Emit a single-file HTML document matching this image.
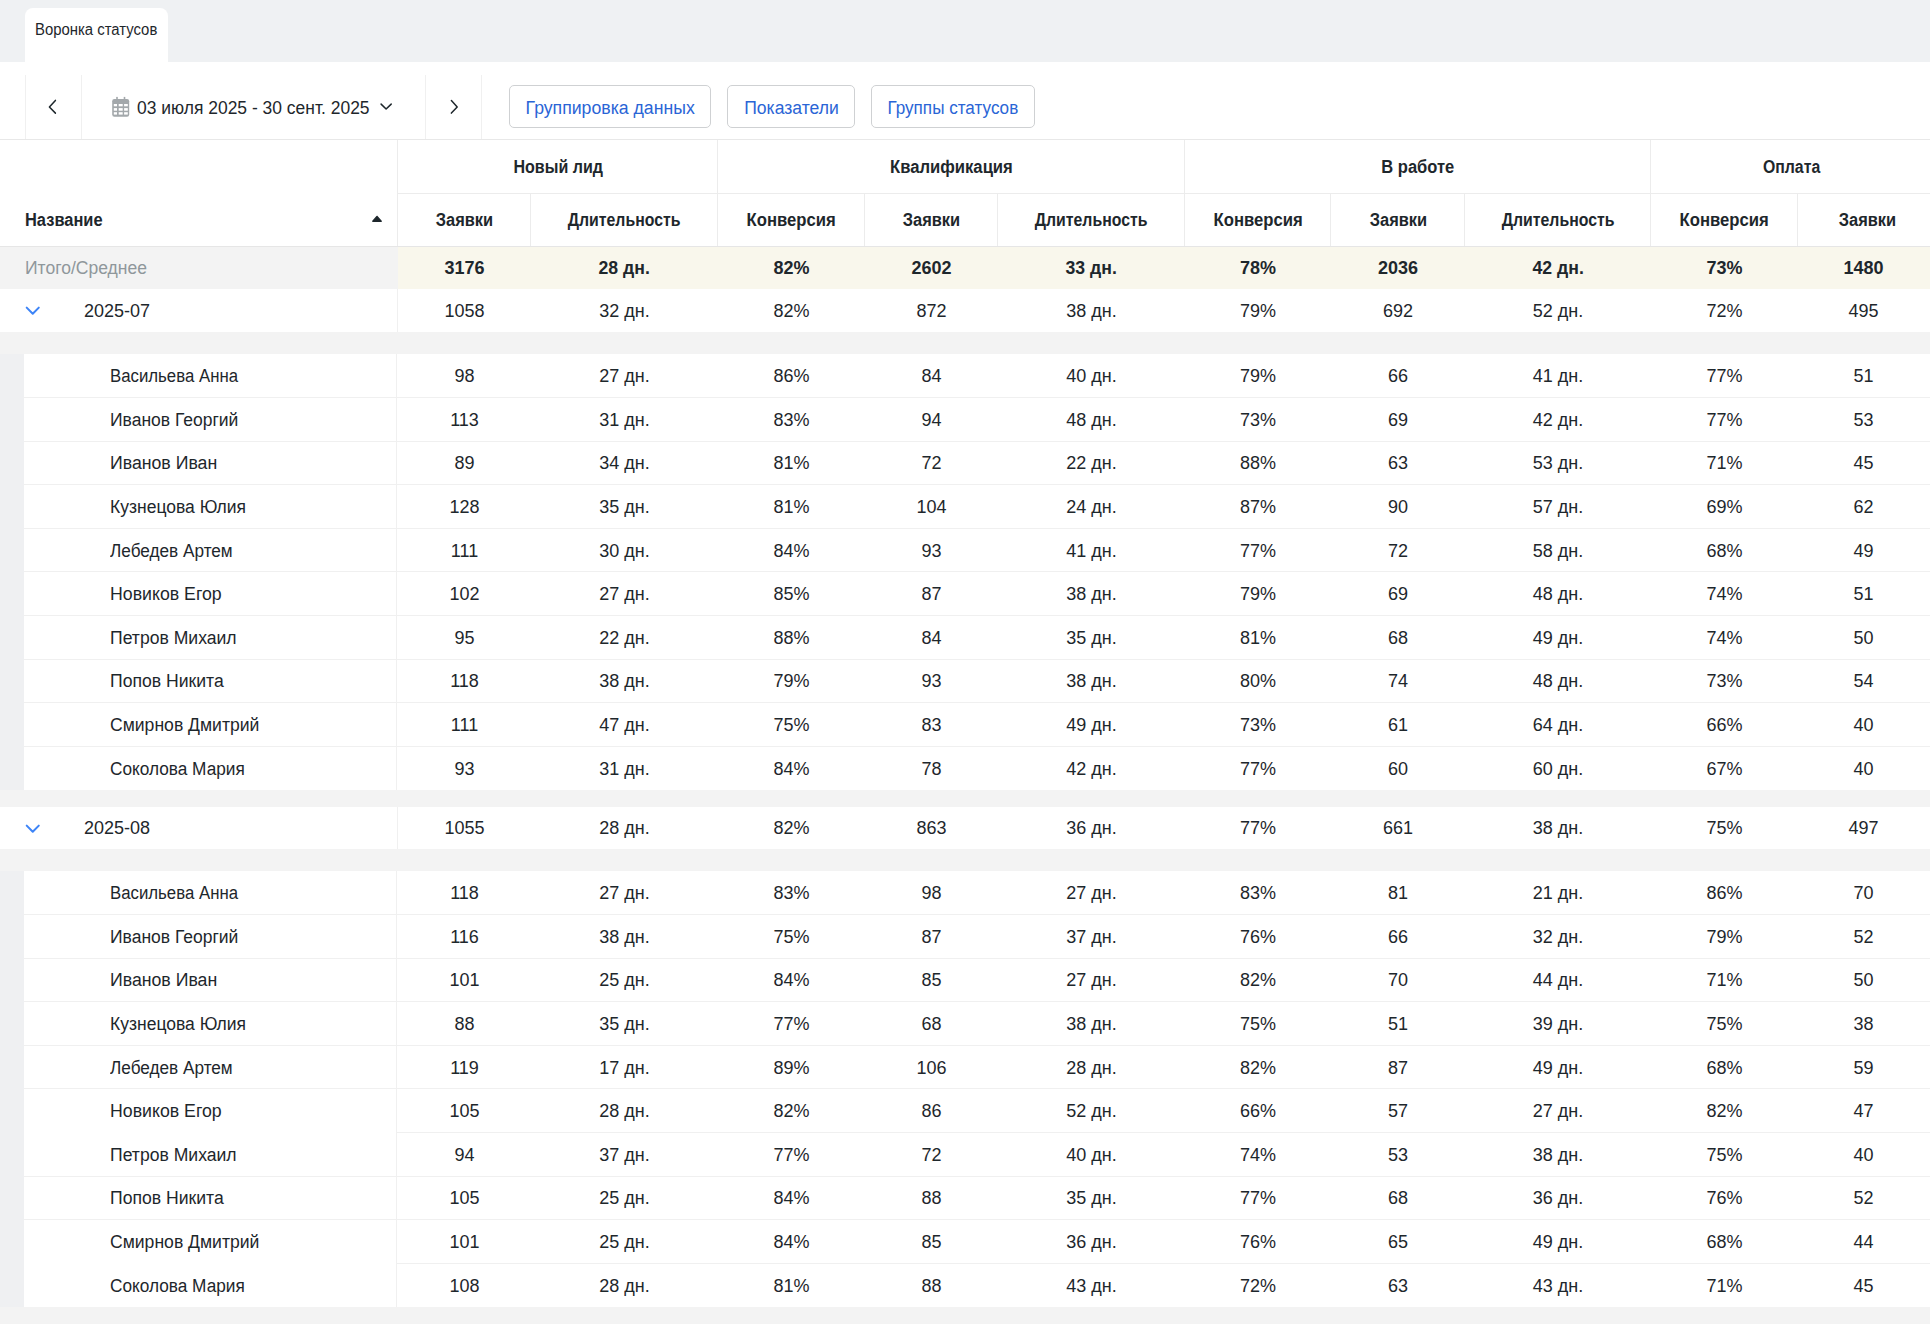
<!DOCTYPE html>
<html><head><meta charset="utf-8"><style>
html,body{margin:0;padding:0}
body{width:1930px;height:1324px;position:relative;overflow:hidden;background:#f3f3f3;font-family:"Liberation Sans",sans-serif;font-size:18px;color:#1e272c}
body>div,body>svg{position:absolute}
.c{display:flex;align-items:center;justify-content:center;white-space:nowrap}
.l{display:flex;align-items:center;white-space:nowrap}
.c span,.l span,.btn span{display:inline-block;position:relative;top:1px}
.l span{transform-origin:left center}
.b{font-weight:bold}
.tab{font-size:16px}
.btn span{top:1.7px}
.btn{display:flex;align-items:center;justify-content:center;border:1px solid #cfd1d3;border-radius:5px;color:#2a65d6;background:#fff;white-space:nowrap}
</style></head><body>
<div style="left:0px;top:0px;width:1930px;height:62px;background:#eff1f3"></div>
<div style="left:25px;top:8px;width:143px;height:54px;background:#fff;border-radius:8px 8px 0 0"></div>
<div class="l tab" style="left:35px;top:19px;height:20px;"><span style="transform:scaleX(0.93)">Воронка статусов</span></div>
<div style="left:0px;top:62px;width:1930px;height:78px;background:#fff"></div>
<div style="left:0px;top:139px;width:1930px;height:1px;background:#e8e8e8"></div>
<div style="left:25px;top:75px;width:1px;height:64px;background:#f0f0f0"></div>
<div style="left:81px;top:75px;width:1px;height:64px;background:#f0f0f0"></div>
<div style="left:425px;top:75px;width:1px;height:64px;background:#f0f0f0"></div>
<div style="left:481px;top:75px;width:1px;height:64px;background:#f0f0f0"></div>
<svg style="left:40px;top:95px" width="24" height="24" viewBox="0 0 24 24"><path d="M15.4 5.4 L9.4 12 L15.4 18.1" fill="none" stroke="#1e272c" stroke-width="1.5" stroke-linecap="round" stroke-linejoin="round"/></svg>
<svg style="left:442px;top:95px" width="24" height="24" viewBox="0 0 24 24"><path d="M9.4 5.6 L15.2 12 L9.4 18.1" fill="none" stroke="#1e272c" stroke-width="1.5" stroke-linecap="round" stroke-linejoin="round"/></svg>
<svg style="left:111px;top:96px" width="20" height="21" viewBox="0 0 20 21">
<rect x="1.2" y="3.1" width="17" height="17.6" rx="2.2" fill="#a3a8ab"/>
<rect x="5.2" y="0.9" width="1.6" height="3" fill="#a3a8ab"/><rect x="12.7" y="0.9" width="1.6" height="3" fill="#a3a8ab"/>
<g fill="#fff"><rect x="2.8" y="8" width="3.2" height="2.3"/><rect x="7.7" y="8" width="4" height="2.3"/><rect x="13.1" y="8" width="3.7" height="2.3"/>
<rect x="2.8" y="12.1" width="3.2" height="2.6"/><rect x="7.7" y="12.1" width="4" height="2.6"/><rect x="13.1" y="12.1" width="3.7" height="2.6"/>
<rect x="2.8" y="16.2" width="3.2" height="2.4"/><rect x="7.7" y="16.2" width="4" height="2.4"/><rect x="13.1" y="16.2" width="3.7" height="2.4"/></g></svg>
<div class="l " style="left:137px;top:95px;height:24px;"><span style="transform:scaleX(0.97)">03 июля 2025 - 30 сент. 2025</span></div>
<svg style="left:374px;top:95px" width="24" height="24" viewBox="0 0 24 24"><path d="M7.1 9.1 L12.1 14 L17.2 9.1" fill="none" stroke="#1e272c" stroke-width="1.5" stroke-linecap="round" stroke-linejoin="round"/></svg>
<div class="btn" style="left:509px;top:85px;width:200px;height:41px"><span style="transform:scaleX(0.982)">Группировка данных</span></div>
<div class="btn" style="left:727px;top:85px;width:126px;height:41px"><span style="transform:scaleX(0.975)">Показатели</span></div>
<div class="btn" style="left:871px;top:85px;width:162px;height:41px"><span style="transform:scaleX(0.95)">Группы статусов</span></div>
<div style="left:0px;top:140px;width:1930px;height:106px;background:#fff"></div>
<div style="left:397px;top:193px;width:1533px;height:1px;background:#ececec"></div>
<div style="left:0px;top:246px;width:1930px;height:1px;background:#e6e6e6"></div>
<div style="left:397px;top:140px;width:1px;height:106px;background:#ececec"></div>
<div style="left:717px;top:140px;width:1px;height:106px;background:#ececec"></div>
<div style="left:1184px;top:140px;width:1px;height:106px;background:#ececec"></div>
<div style="left:1650px;top:140px;width:1px;height:106px;background:#ececec"></div>
<div style="left:530px;top:193px;width:1px;height:53px;background:#ececec"></div>
<div style="left:864px;top:193px;width:1px;height:53px;background:#ececec"></div>
<div style="left:997px;top:193px;width:1px;height:53px;background:#ececec"></div>
<div style="left:1330px;top:193px;width:1px;height:53px;background:#ececec"></div>
<div style="left:1464px;top:193px;width:1px;height:53px;background:#ececec"></div>
<div style="left:1797px;top:193px;width:1px;height:53px;background:#ececec"></div>
<div class="c b" style="left:398px;top:140px;width:320px;height:53px;"><span style="transform:scaleX(0.891)">Новый лид</span></div>
<div class="c b" style="left:718px;top:140px;width:467px;height:53px;"><span style="transform:scaleX(0.925)">Квалификация</span></div>
<div class="c b" style="left:1185px;top:140px;width:466px;height:53px;"><span style="transform:scaleX(0.917)">В работе</span></div>
<div class="c b" style="left:1651px;top:140px;width:281px;height:53px;"><span style="transform:scaleX(0.88)">Оплата</span></div>
<div class="c b" style="left:398px;top:193px;width:133px;height:53px;"><span style="transform:scaleX(0.91)">Заявки</span></div>
<div class="c b" style="left:531px;top:193px;width:187px;height:53px;"><span style="transform:scaleX(0.88)">Длительность</span></div>
<div class="c b" style="left:718px;top:193px;width:147px;height:53px;"><span style="transform:scaleX(0.927)">Конверсия</span></div>
<div class="c b" style="left:865px;top:193px;width:133px;height:53px;"><span style="transform:scaleX(0.91)">Заявки</span></div>
<div class="c b" style="left:998px;top:193px;width:187px;height:53px;"><span style="transform:scaleX(0.88)">Длительность</span></div>
<div class="c b" style="left:1185px;top:193px;width:146px;height:53px;"><span style="transform:scaleX(0.927)">Конверсия</span></div>
<div class="c b" style="left:1331px;top:193px;width:134px;height:53px;"><span style="transform:scaleX(0.91)">Заявки</span></div>
<div class="c b" style="left:1465px;top:193px;width:186px;height:53px;"><span style="transform:scaleX(0.88)">Длительность</span></div>
<div class="c b" style="left:1651px;top:193px;width:147px;height:53px;"><span style="transform:scaleX(0.927)">Конверсия</span></div>
<div class="c b" style="left:1800.5px;top:193px;width:133px;height:53px;"><span style="transform:scaleX(0.91)">Заявки</span></div>
<div class="l b" style="left:25px;top:193px;height:53px;"><span style="transform:scaleX(0.913)">Название</span></div>
<svg style="left:371px;top:214px" width="12" height="9" viewBox="0 0 12 9"><path d="M1.8 7.2 L6 2.4 L10.2 7.2 Z" fill="#1e272c" stroke="#1e272c" stroke-width="1.4" stroke-linejoin="round"/></svg>
<div style="left:0px;top:247px;width:397.5px;height:41.69999999999999px;background:#f3f3f3"></div>
<div style="left:397.5px;top:247px;width:1533px;height:41.69999999999999px;background:#f9f7ec"></div>
<div class="l " style="left:25px;top:247px;height:41.69999999999999px;color:#8f979b"><span style="transform:scaleX(0.974)">Итого/Среднее</span></div>
<div class="c b" style="left:398px;top:247px;width:133px;height:41.69999999999999px;"><span>3176</span></div>
<div class="c b" style="left:531px;top:247px;width:187px;height:41.69999999999999px;"><span style="transform:scaleX(0.98)">28 дн.</span></div>
<div class="c b" style="left:718px;top:247px;width:147px;height:41.69999999999999px;"><span>82%</span></div>
<div class="c b" style="left:865px;top:247px;width:133px;height:41.69999999999999px;"><span>2602</span></div>
<div class="c b" style="left:998px;top:247px;width:187px;height:41.69999999999999px;"><span style="transform:scaleX(0.98)">33 дн.</span></div>
<div class="c b" style="left:1185px;top:247px;width:146px;height:41.69999999999999px;"><span>78%</span></div>
<div class="c b" style="left:1331px;top:247px;width:134px;height:41.69999999999999px;"><span>2036</span></div>
<div class="c b" style="left:1465px;top:247px;width:186px;height:41.69999999999999px;"><span style="transform:scaleX(0.98)">42 дн.</span></div>
<div class="c b" style="left:1651px;top:247px;width:147px;height:41.69999999999999px;"><span>73%</span></div>
<div class="c b" style="left:1797px;top:247px;width:133px;height:41.69999999999999px;"><span>1480</span></div>
<div style="left:0px;top:288.7px;width:1930px;height:43.0px;background:#fff"></div>
<div style="left:397px;top:288.7px;width:1px;height:43.0px;background:#f0f0f0"></div>
<svg style="left:20px;top:298.30px" width="24" height="24" viewBox="0 0 24 24"><path d="M6.7 9.6 L12.75 15.8 L18.8 9.6" fill="none" stroke="#3d84f7" stroke-width="2" stroke-linecap="round" stroke-linejoin="round"/></svg>
<div class="l " style="left:84px;top:288.7px;height:43.0px;"><span>2025-07</span></div>
<div class="c " style="left:398px;top:288.7px;width:133px;height:43.0px;"><span>1058</span></div>
<div class="c " style="left:531px;top:288.7px;width:187px;height:43.0px;"><span>32 дн.</span></div>
<div class="c " style="left:718px;top:288.7px;width:147px;height:43.0px;"><span>82%</span></div>
<div class="c " style="left:865px;top:288.7px;width:133px;height:43.0px;"><span>872</span></div>
<div class="c " style="left:998px;top:288.7px;width:187px;height:43.0px;"><span>38 дн.</span></div>
<div class="c " style="left:1185px;top:288.7px;width:146px;height:43.0px;"><span>79%</span></div>
<div class="c " style="left:1331px;top:288.7px;width:134px;height:43.0px;"><span>692</span></div>
<div class="c " style="left:1465px;top:288.7px;width:186px;height:43.0px;"><span>52 дн.</span></div>
<div class="c " style="left:1651px;top:288.7px;width:147px;height:43.0px;"><span>72%</span></div>
<div class="c " style="left:1797px;top:288.7px;width:133px;height:43.0px;"><span>495</span></div>
<div style="left:0px;top:354px;width:1930px;height:435.9000000000001px;background:#fff"></div>
<div style="left:0px;top:354px;width:24px;height:435.9000000000001px;background:#eff0f2"></div>
<div style="left:396px;top:354px;width:1px;height:435.9000000000001px;background:#f0f0f0"></div>
<div class="l " style="left:110px;top:354.0px;height:43.59px;"><span style="transform:scaleX(0.933)">Васильева Анна</span></div>
<div class="c " style="left:398px;top:354.0px;width:133px;height:43.59px;"><span>98</span></div>
<div class="c " style="left:531px;top:354.0px;width:187px;height:43.59px;"><span>27 дн.</span></div>
<div class="c " style="left:718px;top:354.0px;width:147px;height:43.59px;"><span>86%</span></div>
<div class="c " style="left:865px;top:354.0px;width:133px;height:43.59px;"><span>84</span></div>
<div class="c " style="left:998px;top:354.0px;width:187px;height:43.59px;"><span>40 дн.</span></div>
<div class="c " style="left:1185px;top:354.0px;width:146px;height:43.59px;"><span>79%</span></div>
<div class="c " style="left:1331px;top:354.0px;width:134px;height:43.59px;"><span>66</span></div>
<div class="c " style="left:1465px;top:354.0px;width:186px;height:43.59px;"><span>41 дн.</span></div>
<div class="c " style="left:1651px;top:354.0px;width:147px;height:43.59px;"><span>77%</span></div>
<div class="c " style="left:1797px;top:354.0px;width:133px;height:43.59px;"><span>51</span></div>
<div style="left:24px;top:397.09000000000003px;width:1906px;height:1px;background:#f0f0f0"></div>
<div class="l " style="left:110px;top:397.59000000000003px;height:43.59px;"><span style="transform:scaleX(0.972)">Иванов Георгий</span></div>
<div class="c " style="left:398px;top:397.59000000000003px;width:133px;height:43.59px;"><span>113</span></div>
<div class="c " style="left:531px;top:397.59000000000003px;width:187px;height:43.59px;"><span>31 дн.</span></div>
<div class="c " style="left:718px;top:397.59000000000003px;width:147px;height:43.59px;"><span>83%</span></div>
<div class="c " style="left:865px;top:397.59000000000003px;width:133px;height:43.59px;"><span>94</span></div>
<div class="c " style="left:998px;top:397.59000000000003px;width:187px;height:43.59px;"><span>48 дн.</span></div>
<div class="c " style="left:1185px;top:397.59000000000003px;width:146px;height:43.59px;"><span>73%</span></div>
<div class="c " style="left:1331px;top:397.59000000000003px;width:134px;height:43.59px;"><span>69</span></div>
<div class="c " style="left:1465px;top:397.59000000000003px;width:186px;height:43.59px;"><span>42 дн.</span></div>
<div class="c " style="left:1651px;top:397.59000000000003px;width:147px;height:43.59px;"><span>77%</span></div>
<div class="c " style="left:1797px;top:397.59000000000003px;width:133px;height:43.59px;"><span>53</span></div>
<div style="left:24px;top:440.68px;width:1906px;height:1px;background:#f0f0f0"></div>
<div class="l " style="left:110px;top:441.18px;height:43.59px;"><span style="transform:scaleX(0.983)">Иванов Иван</span></div>
<div class="c " style="left:398px;top:441.18px;width:133px;height:43.59px;"><span>89</span></div>
<div class="c " style="left:531px;top:441.18px;width:187px;height:43.59px;"><span>34 дн.</span></div>
<div class="c " style="left:718px;top:441.18px;width:147px;height:43.59px;"><span>81%</span></div>
<div class="c " style="left:865px;top:441.18px;width:133px;height:43.59px;"><span>72</span></div>
<div class="c " style="left:998px;top:441.18px;width:187px;height:43.59px;"><span>22 дн.</span></div>
<div class="c " style="left:1185px;top:441.18px;width:146px;height:43.59px;"><span>88%</span></div>
<div class="c " style="left:1331px;top:441.18px;width:134px;height:43.59px;"><span>63</span></div>
<div class="c " style="left:1465px;top:441.18px;width:186px;height:43.59px;"><span>53 дн.</span></div>
<div class="c " style="left:1651px;top:441.18px;width:147px;height:43.59px;"><span>71%</span></div>
<div class="c " style="left:1797px;top:441.18px;width:133px;height:43.59px;"><span>45</span></div>
<div style="left:24px;top:484.27px;width:1906px;height:1px;background:#f0f0f0"></div>
<div class="l " style="left:110px;top:484.77px;height:43.59px;"><span style="transform:scaleX(0.973)">Кузнецова Юлия</span></div>
<div class="c " style="left:398px;top:484.77px;width:133px;height:43.59px;"><span>128</span></div>
<div class="c " style="left:531px;top:484.77px;width:187px;height:43.59px;"><span>35 дн.</span></div>
<div class="c " style="left:718px;top:484.77px;width:147px;height:43.59px;"><span>81%</span></div>
<div class="c " style="left:865px;top:484.77px;width:133px;height:43.59px;"><span>104</span></div>
<div class="c " style="left:998px;top:484.77px;width:187px;height:43.59px;"><span>24 дн.</span></div>
<div class="c " style="left:1185px;top:484.77px;width:146px;height:43.59px;"><span>87%</span></div>
<div class="c " style="left:1331px;top:484.77px;width:134px;height:43.59px;"><span>90</span></div>
<div class="c " style="left:1465px;top:484.77px;width:186px;height:43.59px;"><span>57 дн.</span></div>
<div class="c " style="left:1651px;top:484.77px;width:147px;height:43.59px;"><span>69%</span></div>
<div class="c " style="left:1797px;top:484.77px;width:133px;height:43.59px;"><span>62</span></div>
<div style="left:24px;top:527.86px;width:1906px;height:1px;background:#f0f0f0"></div>
<div class="l " style="left:110px;top:528.36px;height:43.59px;"><span style="transform:scaleX(0.955)">Лебедев Артем</span></div>
<div class="c " style="left:398px;top:528.36px;width:133px;height:43.59px;"><span>111</span></div>
<div class="c " style="left:531px;top:528.36px;width:187px;height:43.59px;"><span>30 дн.</span></div>
<div class="c " style="left:718px;top:528.36px;width:147px;height:43.59px;"><span>84%</span></div>
<div class="c " style="left:865px;top:528.36px;width:133px;height:43.59px;"><span>93</span></div>
<div class="c " style="left:998px;top:528.36px;width:187px;height:43.59px;"><span>41 дн.</span></div>
<div class="c " style="left:1185px;top:528.36px;width:146px;height:43.59px;"><span>77%</span></div>
<div class="c " style="left:1331px;top:528.36px;width:134px;height:43.59px;"><span>72</span></div>
<div class="c " style="left:1465px;top:528.36px;width:186px;height:43.59px;"><span>58 дн.</span></div>
<div class="c " style="left:1651px;top:528.36px;width:147px;height:43.59px;"><span>68%</span></div>
<div class="c " style="left:1797px;top:528.36px;width:133px;height:43.59px;"><span>49</span></div>
<div style="left:24px;top:571.45px;width:1906px;height:1px;background:#f0f0f0"></div>
<div class="l " style="left:110px;top:571.95px;height:43.59px;"><span style="transform:scaleX(0.984)">Новиков Егор</span></div>
<div class="c " style="left:398px;top:571.95px;width:133px;height:43.59px;"><span>102</span></div>
<div class="c " style="left:531px;top:571.95px;width:187px;height:43.59px;"><span>27 дн.</span></div>
<div class="c " style="left:718px;top:571.95px;width:147px;height:43.59px;"><span>85%</span></div>
<div class="c " style="left:865px;top:571.95px;width:133px;height:43.59px;"><span>87</span></div>
<div class="c " style="left:998px;top:571.95px;width:187px;height:43.59px;"><span>38 дн.</span></div>
<div class="c " style="left:1185px;top:571.95px;width:146px;height:43.59px;"><span>79%</span></div>
<div class="c " style="left:1331px;top:571.95px;width:134px;height:43.59px;"><span>69</span></div>
<div class="c " style="left:1465px;top:571.95px;width:186px;height:43.59px;"><span>48 дн.</span></div>
<div class="c " style="left:1651px;top:571.95px;width:147px;height:43.59px;"><span>74%</span></div>
<div class="c " style="left:1797px;top:571.95px;width:133px;height:43.59px;"><span>51</span></div>
<div style="left:24px;top:615.04px;width:1906px;height:1px;background:#f0f0f0"></div>
<div class="l " style="left:110px;top:615.54px;height:43.59px;"><span style="transform:scaleX(0.977)">Петров Михаил</span></div>
<div class="c " style="left:398px;top:615.54px;width:133px;height:43.59px;"><span>95</span></div>
<div class="c " style="left:531px;top:615.54px;width:187px;height:43.59px;"><span>22 дн.</span></div>
<div class="c " style="left:718px;top:615.54px;width:147px;height:43.59px;"><span>88%</span></div>
<div class="c " style="left:865px;top:615.54px;width:133px;height:43.59px;"><span>84</span></div>
<div class="c " style="left:998px;top:615.54px;width:187px;height:43.59px;"><span>35 дн.</span></div>
<div class="c " style="left:1185px;top:615.54px;width:146px;height:43.59px;"><span>81%</span></div>
<div class="c " style="left:1331px;top:615.54px;width:134px;height:43.59px;"><span>68</span></div>
<div class="c " style="left:1465px;top:615.54px;width:186px;height:43.59px;"><span>49 дн.</span></div>
<div class="c " style="left:1651px;top:615.54px;width:147px;height:43.59px;"><span>74%</span></div>
<div class="c " style="left:1797px;top:615.54px;width:133px;height:43.59px;"><span>50</span></div>
<div style="left:24px;top:658.63px;width:1906px;height:1px;background:#f0f0f0"></div>
<div class="l " style="left:110px;top:659.13px;height:43.59px;"><span style="transform:scaleX(0.978)">Попов Никита</span></div>
<div class="c " style="left:398px;top:659.13px;width:133px;height:43.59px;"><span>118</span></div>
<div class="c " style="left:531px;top:659.13px;width:187px;height:43.59px;"><span>38 дн.</span></div>
<div class="c " style="left:718px;top:659.13px;width:147px;height:43.59px;"><span>79%</span></div>
<div class="c " style="left:865px;top:659.13px;width:133px;height:43.59px;"><span>93</span></div>
<div class="c " style="left:998px;top:659.13px;width:187px;height:43.59px;"><span>38 дн.</span></div>
<div class="c " style="left:1185px;top:659.13px;width:146px;height:43.59px;"><span>80%</span></div>
<div class="c " style="left:1331px;top:659.13px;width:134px;height:43.59px;"><span>74</span></div>
<div class="c " style="left:1465px;top:659.13px;width:186px;height:43.59px;"><span>48 дн.</span></div>
<div class="c " style="left:1651px;top:659.13px;width:147px;height:43.59px;"><span>73%</span></div>
<div class="c " style="left:1797px;top:659.13px;width:133px;height:43.59px;"><span>54</span></div>
<div style="left:24px;top:702.22px;width:1906px;height:1px;background:#f0f0f0"></div>
<div class="l " style="left:110px;top:702.72px;height:43.59px;"><span style="transform:scaleX(0.977)">Смирнов Дмитрий</span></div>
<div class="c " style="left:398px;top:702.72px;width:133px;height:43.59px;"><span>111</span></div>
<div class="c " style="left:531px;top:702.72px;width:187px;height:43.59px;"><span>47 дн.</span></div>
<div class="c " style="left:718px;top:702.72px;width:147px;height:43.59px;"><span>75%</span></div>
<div class="c " style="left:865px;top:702.72px;width:133px;height:43.59px;"><span>83</span></div>
<div class="c " style="left:998px;top:702.72px;width:187px;height:43.59px;"><span>49 дн.</span></div>
<div class="c " style="left:1185px;top:702.72px;width:146px;height:43.59px;"><span>73%</span></div>
<div class="c " style="left:1331px;top:702.72px;width:134px;height:43.59px;"><span>61</span></div>
<div class="c " style="left:1465px;top:702.72px;width:186px;height:43.59px;"><span>64 дн.</span></div>
<div class="c " style="left:1651px;top:702.72px;width:147px;height:43.59px;"><span>66%</span></div>
<div class="c " style="left:1797px;top:702.72px;width:133px;height:43.59px;"><span>40</span></div>
<div style="left:24px;top:745.8100000000001px;width:1906px;height:1px;background:#f0f0f0"></div>
<div class="l " style="left:110px;top:746.3100000000001px;height:43.59px;"><span style="transform:scaleX(0.957)">Соколова Мария</span></div>
<div class="c " style="left:398px;top:746.3100000000001px;width:133px;height:43.59px;"><span>93</span></div>
<div class="c " style="left:531px;top:746.3100000000001px;width:187px;height:43.59px;"><span>31 дн.</span></div>
<div class="c " style="left:718px;top:746.3100000000001px;width:147px;height:43.59px;"><span>84%</span></div>
<div class="c " style="left:865px;top:746.3100000000001px;width:133px;height:43.59px;"><span>78</span></div>
<div class="c " style="left:998px;top:746.3100000000001px;width:187px;height:43.59px;"><span>42 дн.</span></div>
<div class="c " style="left:1185px;top:746.3100000000001px;width:146px;height:43.59px;"><span>77%</span></div>
<div class="c " style="left:1331px;top:746.3100000000001px;width:134px;height:43.59px;"><span>60</span></div>
<div class="c " style="left:1465px;top:746.3100000000001px;width:186px;height:43.59px;"><span>60 дн.</span></div>
<div class="c " style="left:1651px;top:746.3100000000001px;width:147px;height:43.59px;"><span>67%</span></div>
<div class="c " style="left:1797px;top:746.3100000000001px;width:133px;height:43.59px;"><span>40</span></div>
<div style="left:0px;top:806.8px;width:1930px;height:42.30000000000007px;background:#fff"></div>
<div style="left:397px;top:806.8px;width:1px;height:42.30000000000007px;background:#f0f0f0"></div>
<svg style="left:20px;top:816.05px" width="24" height="24" viewBox="0 0 24 24"><path d="M6.7 9.6 L12.75 15.8 L18.8 9.6" fill="none" stroke="#3d84f7" stroke-width="2" stroke-linecap="round" stroke-linejoin="round"/></svg>
<div class="l " style="left:84px;top:806.8px;height:42.30000000000007px;"><span>2025-08</span></div>
<div class="c " style="left:398px;top:806.8px;width:133px;height:42.30000000000007px;"><span>1055</span></div>
<div class="c " style="left:531px;top:806.8px;width:187px;height:42.30000000000007px;"><span>28 дн.</span></div>
<div class="c " style="left:718px;top:806.8px;width:147px;height:42.30000000000007px;"><span>82%</span></div>
<div class="c " style="left:865px;top:806.8px;width:133px;height:42.30000000000007px;"><span>863</span></div>
<div class="c " style="left:998px;top:806.8px;width:187px;height:42.30000000000007px;"><span>36 дн.</span></div>
<div class="c " style="left:1185px;top:806.8px;width:146px;height:42.30000000000007px;"><span>77%</span></div>
<div class="c " style="left:1331px;top:806.8px;width:134px;height:42.30000000000007px;"><span>661</span></div>
<div class="c " style="left:1465px;top:806.8px;width:186px;height:42.30000000000007px;"><span>38 дн.</span></div>
<div class="c " style="left:1651px;top:806.8px;width:147px;height:42.30000000000007px;"><span>75%</span></div>
<div class="c " style="left:1797px;top:806.8px;width:133px;height:42.30000000000007px;"><span>497</span></div>
<div style="left:0px;top:871px;width:1930px;height:435.9000000000001px;background:#fff"></div>
<div style="left:0px;top:871px;width:24px;height:435.9000000000001px;background:#eff0f2"></div>
<div style="left:396px;top:871px;width:1px;height:435.9000000000001px;background:#f0f0f0"></div>
<div class="l " style="left:110px;top:871.0px;height:43.59px;"><span style="transform:scaleX(0.933)">Васильева Анна</span></div>
<div class="c " style="left:398px;top:871.0px;width:133px;height:43.59px;"><span>118</span></div>
<div class="c " style="left:531px;top:871.0px;width:187px;height:43.59px;"><span>27 дн.</span></div>
<div class="c " style="left:718px;top:871.0px;width:147px;height:43.59px;"><span>83%</span></div>
<div class="c " style="left:865px;top:871.0px;width:133px;height:43.59px;"><span>98</span></div>
<div class="c " style="left:998px;top:871.0px;width:187px;height:43.59px;"><span>27 дн.</span></div>
<div class="c " style="left:1185px;top:871.0px;width:146px;height:43.59px;"><span>83%</span></div>
<div class="c " style="left:1331px;top:871.0px;width:134px;height:43.59px;"><span>81</span></div>
<div class="c " style="left:1465px;top:871.0px;width:186px;height:43.59px;"><span>21 дн.</span></div>
<div class="c " style="left:1651px;top:871.0px;width:147px;height:43.59px;"><span>86%</span></div>
<div class="c " style="left:1797px;top:871.0px;width:133px;height:43.59px;"><span>70</span></div>
<div style="left:24px;top:914.09px;width:1906px;height:1px;background:#f0f0f0"></div>
<div class="l " style="left:110px;top:914.59px;height:43.59px;"><span style="transform:scaleX(0.972)">Иванов Георгий</span></div>
<div class="c " style="left:398px;top:914.59px;width:133px;height:43.59px;"><span>116</span></div>
<div class="c " style="left:531px;top:914.59px;width:187px;height:43.59px;"><span>38 дн.</span></div>
<div class="c " style="left:718px;top:914.59px;width:147px;height:43.59px;"><span>75%</span></div>
<div class="c " style="left:865px;top:914.59px;width:133px;height:43.59px;"><span>87</span></div>
<div class="c " style="left:998px;top:914.59px;width:187px;height:43.59px;"><span>37 дн.</span></div>
<div class="c " style="left:1185px;top:914.59px;width:146px;height:43.59px;"><span>76%</span></div>
<div class="c " style="left:1331px;top:914.59px;width:134px;height:43.59px;"><span>66</span></div>
<div class="c " style="left:1465px;top:914.59px;width:186px;height:43.59px;"><span>32 дн.</span></div>
<div class="c " style="left:1651px;top:914.59px;width:147px;height:43.59px;"><span>79%</span></div>
<div class="c " style="left:1797px;top:914.59px;width:133px;height:43.59px;"><span>52</span></div>
<div style="left:24px;top:957.6800000000001px;width:1906px;height:1px;background:#f0f0f0"></div>
<div class="l " style="left:110px;top:958.1800000000001px;height:43.59px;"><span style="transform:scaleX(0.983)">Иванов Иван</span></div>
<div class="c " style="left:398px;top:958.1800000000001px;width:133px;height:43.59px;"><span>101</span></div>
<div class="c " style="left:531px;top:958.1800000000001px;width:187px;height:43.59px;"><span>25 дн.</span></div>
<div class="c " style="left:718px;top:958.1800000000001px;width:147px;height:43.59px;"><span>84%</span></div>
<div class="c " style="left:865px;top:958.1800000000001px;width:133px;height:43.59px;"><span>85</span></div>
<div class="c " style="left:998px;top:958.1800000000001px;width:187px;height:43.59px;"><span>27 дн.</span></div>
<div class="c " style="left:1185px;top:958.1800000000001px;width:146px;height:43.59px;"><span>82%</span></div>
<div class="c " style="left:1331px;top:958.1800000000001px;width:134px;height:43.59px;"><span>70</span></div>
<div class="c " style="left:1465px;top:958.1800000000001px;width:186px;height:43.59px;"><span>44 дн.</span></div>
<div class="c " style="left:1651px;top:958.1800000000001px;width:147px;height:43.59px;"><span>71%</span></div>
<div class="c " style="left:1797px;top:958.1800000000001px;width:133px;height:43.59px;"><span>50</span></div>
<div style="left:24px;top:1001.27px;width:1906px;height:1px;background:#f0f0f0"></div>
<div class="l " style="left:110px;top:1001.77px;height:43.59px;"><span style="transform:scaleX(0.973)">Кузнецова Юлия</span></div>
<div class="c " style="left:398px;top:1001.77px;width:133px;height:43.59px;"><span>88</span></div>
<div class="c " style="left:531px;top:1001.77px;width:187px;height:43.59px;"><span>35 дн.</span></div>
<div class="c " style="left:718px;top:1001.77px;width:147px;height:43.59px;"><span>77%</span></div>
<div class="c " style="left:865px;top:1001.77px;width:133px;height:43.59px;"><span>68</span></div>
<div class="c " style="left:998px;top:1001.77px;width:187px;height:43.59px;"><span>38 дн.</span></div>
<div class="c " style="left:1185px;top:1001.77px;width:146px;height:43.59px;"><span>75%</span></div>
<div class="c " style="left:1331px;top:1001.77px;width:134px;height:43.59px;"><span>51</span></div>
<div class="c " style="left:1465px;top:1001.77px;width:186px;height:43.59px;"><span>39 дн.</span></div>
<div class="c " style="left:1651px;top:1001.77px;width:147px;height:43.59px;"><span>75%</span></div>
<div class="c " style="left:1797px;top:1001.77px;width:133px;height:43.59px;"><span>38</span></div>
<div style="left:24px;top:1044.8600000000001px;width:1906px;height:1px;background:#f0f0f0"></div>
<div class="l " style="left:110px;top:1045.3600000000001px;height:43.59px;"><span style="transform:scaleX(0.955)">Лебедев Артем</span></div>
<div class="c " style="left:398px;top:1045.3600000000001px;width:133px;height:43.59px;"><span>119</span></div>
<div class="c " style="left:531px;top:1045.3600000000001px;width:187px;height:43.59px;"><span>17 дн.</span></div>
<div class="c " style="left:718px;top:1045.3600000000001px;width:147px;height:43.59px;"><span>89%</span></div>
<div class="c " style="left:865px;top:1045.3600000000001px;width:133px;height:43.59px;"><span>106</span></div>
<div class="c " style="left:998px;top:1045.3600000000001px;width:187px;height:43.59px;"><span>28 дн.</span></div>
<div class="c " style="left:1185px;top:1045.3600000000001px;width:146px;height:43.59px;"><span>82%</span></div>
<div class="c " style="left:1331px;top:1045.3600000000001px;width:134px;height:43.59px;"><span>87</span></div>
<div class="c " style="left:1465px;top:1045.3600000000001px;width:186px;height:43.59px;"><span>49 дн.</span></div>
<div class="c " style="left:1651px;top:1045.3600000000001px;width:147px;height:43.59px;"><span>68%</span></div>
<div class="c " style="left:1797px;top:1045.3600000000001px;width:133px;height:43.59px;"><span>59</span></div>
<div style="left:24px;top:1088.45px;width:1906px;height:1px;background:#f0f0f0"></div>
<div class="l " style="left:110px;top:1088.95px;height:43.59px;"><span style="transform:scaleX(0.984)">Новиков Егор</span></div>
<div class="c " style="left:398px;top:1088.95px;width:133px;height:43.59px;"><span>105</span></div>
<div class="c " style="left:531px;top:1088.95px;width:187px;height:43.59px;"><span>28 дн.</span></div>
<div class="c " style="left:718px;top:1088.95px;width:147px;height:43.59px;"><span>82%</span></div>
<div class="c " style="left:865px;top:1088.95px;width:133px;height:43.59px;"><span>86</span></div>
<div class="c " style="left:998px;top:1088.95px;width:187px;height:43.59px;"><span>52 дн.</span></div>
<div class="c " style="left:1185px;top:1088.95px;width:146px;height:43.59px;"><span>66%</span></div>
<div class="c " style="left:1331px;top:1088.95px;width:134px;height:43.59px;"><span>57</span></div>
<div class="c " style="left:1465px;top:1088.95px;width:186px;height:43.59px;"><span>27 дн.</span></div>
<div class="c " style="left:1651px;top:1088.95px;width:147px;height:43.59px;"><span>82%</span></div>
<div class="c " style="left:1797px;top:1088.95px;width:133px;height:43.59px;"><span>47</span></div>
<div style="left:397px;top:1132.04px;width:1533px;height:1px;background:#f0f0f0"></div>
<div class="l " style="left:110px;top:1132.54px;height:43.59px;"><span style="transform:scaleX(0.977)">Петров Михаил</span></div>
<div class="c " style="left:398px;top:1132.54px;width:133px;height:43.59px;"><span>94</span></div>
<div class="c " style="left:531px;top:1132.54px;width:187px;height:43.59px;"><span>37 дн.</span></div>
<div class="c " style="left:718px;top:1132.54px;width:147px;height:43.59px;"><span>77%</span></div>
<div class="c " style="left:865px;top:1132.54px;width:133px;height:43.59px;"><span>72</span></div>
<div class="c " style="left:998px;top:1132.54px;width:187px;height:43.59px;"><span>40 дн.</span></div>
<div class="c " style="left:1185px;top:1132.54px;width:146px;height:43.59px;"><span>74%</span></div>
<div class="c " style="left:1331px;top:1132.54px;width:134px;height:43.59px;"><span>53</span></div>
<div class="c " style="left:1465px;top:1132.54px;width:186px;height:43.59px;"><span>38 дн.</span></div>
<div class="c " style="left:1651px;top:1132.54px;width:147px;height:43.59px;"><span>75%</span></div>
<div class="c " style="left:1797px;top:1132.54px;width:133px;height:43.59px;"><span>40</span></div>
<div style="left:24px;top:1175.63px;width:1906px;height:1px;background:#f0f0f0"></div>
<div class="l " style="left:110px;top:1176.13px;height:43.59px;"><span style="transform:scaleX(0.978)">Попов Никита</span></div>
<div class="c " style="left:398px;top:1176.13px;width:133px;height:43.59px;"><span>105</span></div>
<div class="c " style="left:531px;top:1176.13px;width:187px;height:43.59px;"><span>25 дн.</span></div>
<div class="c " style="left:718px;top:1176.13px;width:147px;height:43.59px;"><span>84%</span></div>
<div class="c " style="left:865px;top:1176.13px;width:133px;height:43.59px;"><span>88</span></div>
<div class="c " style="left:998px;top:1176.13px;width:187px;height:43.59px;"><span>35 дн.</span></div>
<div class="c " style="left:1185px;top:1176.13px;width:146px;height:43.59px;"><span>77%</span></div>
<div class="c " style="left:1331px;top:1176.13px;width:134px;height:43.59px;"><span>68</span></div>
<div class="c " style="left:1465px;top:1176.13px;width:186px;height:43.59px;"><span>36 дн.</span></div>
<div class="c " style="left:1651px;top:1176.13px;width:147px;height:43.59px;"><span>76%</span></div>
<div class="c " style="left:1797px;top:1176.13px;width:133px;height:43.59px;"><span>52</span></div>
<div style="left:24px;top:1219.22px;width:1906px;height:1px;background:#f0f0f0"></div>
<div class="l " style="left:110px;top:1219.72px;height:43.59px;"><span style="transform:scaleX(0.977)">Смирнов Дмитрий</span></div>
<div class="c " style="left:398px;top:1219.72px;width:133px;height:43.59px;"><span>101</span></div>
<div class="c " style="left:531px;top:1219.72px;width:187px;height:43.59px;"><span>25 дн.</span></div>
<div class="c " style="left:718px;top:1219.72px;width:147px;height:43.59px;"><span>84%</span></div>
<div class="c " style="left:865px;top:1219.72px;width:133px;height:43.59px;"><span>85</span></div>
<div class="c " style="left:998px;top:1219.72px;width:187px;height:43.59px;"><span>36 дн.</span></div>
<div class="c " style="left:1185px;top:1219.72px;width:146px;height:43.59px;"><span>76%</span></div>
<div class="c " style="left:1331px;top:1219.72px;width:134px;height:43.59px;"><span>65</span></div>
<div class="c " style="left:1465px;top:1219.72px;width:186px;height:43.59px;"><span>49 дн.</span></div>
<div class="c " style="left:1651px;top:1219.72px;width:147px;height:43.59px;"><span>68%</span></div>
<div class="c " style="left:1797px;top:1219.72px;width:133px;height:43.59px;"><span>44</span></div>
<div style="left:397px;top:1262.81px;width:1533px;height:1px;background:#f0f0f0"></div>
<div class="l " style="left:110px;top:1263.31px;height:43.59px;"><span style="transform:scaleX(0.957)">Соколова Мария</span></div>
<div class="c " style="left:398px;top:1263.31px;width:133px;height:43.59px;"><span>108</span></div>
<div class="c " style="left:531px;top:1263.31px;width:187px;height:43.59px;"><span>28 дн.</span></div>
<div class="c " style="left:718px;top:1263.31px;width:147px;height:43.59px;"><span>81%</span></div>
<div class="c " style="left:865px;top:1263.31px;width:133px;height:43.59px;"><span>88</span></div>
<div class="c " style="left:998px;top:1263.31px;width:187px;height:43.59px;"><span>43 дн.</span></div>
<div class="c " style="left:1185px;top:1263.31px;width:146px;height:43.59px;"><span>72%</span></div>
<div class="c " style="left:1331px;top:1263.31px;width:134px;height:43.59px;"><span>63</span></div>
<div class="c " style="left:1465px;top:1263.31px;width:186px;height:43.59px;"><span>43 дн.</span></div>
<div class="c " style="left:1651px;top:1263.31px;width:147px;height:43.59px;"><span>71%</span></div>
<div class="c " style="left:1797px;top:1263.31px;width:133px;height:43.59px;"><span>45</span></div>
</body></html>
